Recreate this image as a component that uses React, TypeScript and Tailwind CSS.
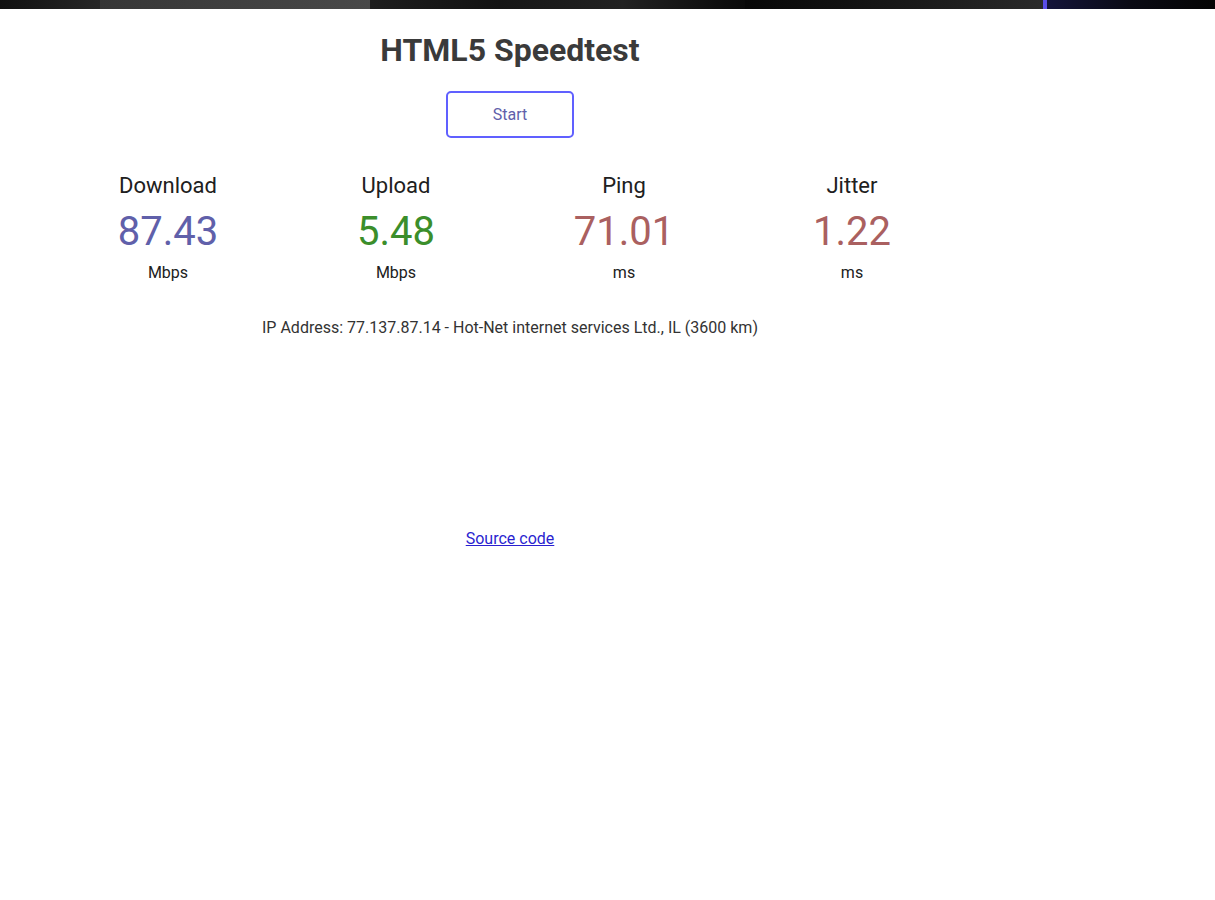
import React from 'react';

const TESTS = [
  { name: 'Download', value: '87.43', unit: 'Mbps', color: 'text-[#6060AA]' },
  { name: 'Upload', value: '5.48', unit: 'Mbps', color: 'text-[#3b8e2b]' },
  { name: 'Ping', value: '71.01', unit: 'ms', color: 'text-[#AA6060]' },
  { name: 'Jitter', value: '1.22', unit: 'ms', color: 'text-[#AA6060]' },
];

const TopStrip: React.FC = () => (
  <div className="flex h-[9px] w-full bg-[#0b0b0b]">
    <div className="w-[100px] bg-gradient-to-r from-[#111] to-[#262626]" />
    <div className="w-[270px] bg-gradient-to-r from-[#363636] to-[#494949]" />
    <div className="w-[130px] bg-gradient-to-r from-[#1d1d1d] to-[#121212]" />
    <div className="w-[245px] bg-gradient-to-r from-[#161616] via-[#222] to-[#0a0a0a]" />
    <div className="w-[298px] bg-gradient-to-r from-[#070707] to-[#2a2a2a]" />
    <div className="w-[4px] bg-[#5a4ee8]" />
    <div className="flex-1 bg-gradient-to-r from-[#14143a] via-[#0a0a14] to-[#050505]" />
  </div>
);

export default function App() {
  return (
    <div className="min-h-[900px] bg-white font-['Roboto',sans-serif] text-[#333]">
      <TopStrip />
      <div className="w-[1020px] flex flex-col items-center">
        <h1 className="mt-[21px] text-[32px] leading-[40px] font-bold text-[#3a3a3a]">HTML5 Speedtest</h1>

        <button className="mt-[21px] w-[128px] h-[47px] rounded-[5px] border-[2.4px] border-[#6060FF] text-[16px] text-[#6060AA] bg-white">
          Start
        </button>

        <div className="mt-[35px] flex">
          {TESTS.map((t) => (
            <div key={t.name} className="w-[228px] flex flex-col items-center">
              <div className="text-[22px] leading-[26px] text-[#202020]">{t.name}</div>
              <div className={`mt-[9px] text-[40px] leading-[48px] ${t.color}`}>{t.value}</div>
              <div className="mt-[7px] text-[16px] leading-[20px] text-[#202020]">{t.unit}</div>
            </div>
          ))}
        </div>

        <div className="mt-[35px] text-[16px] leading-[20px] text-[#333]">
          IP Address: 77.137.87.14 - Hot-Net internet services Ltd., IL (3600 km)
        </div>

        <a href="#" className="mt-[191px] text-[16px] leading-[20px] text-[#2a1fd0] underline">
          Source code
        </a>
      </div>
    </div>
  );
}
